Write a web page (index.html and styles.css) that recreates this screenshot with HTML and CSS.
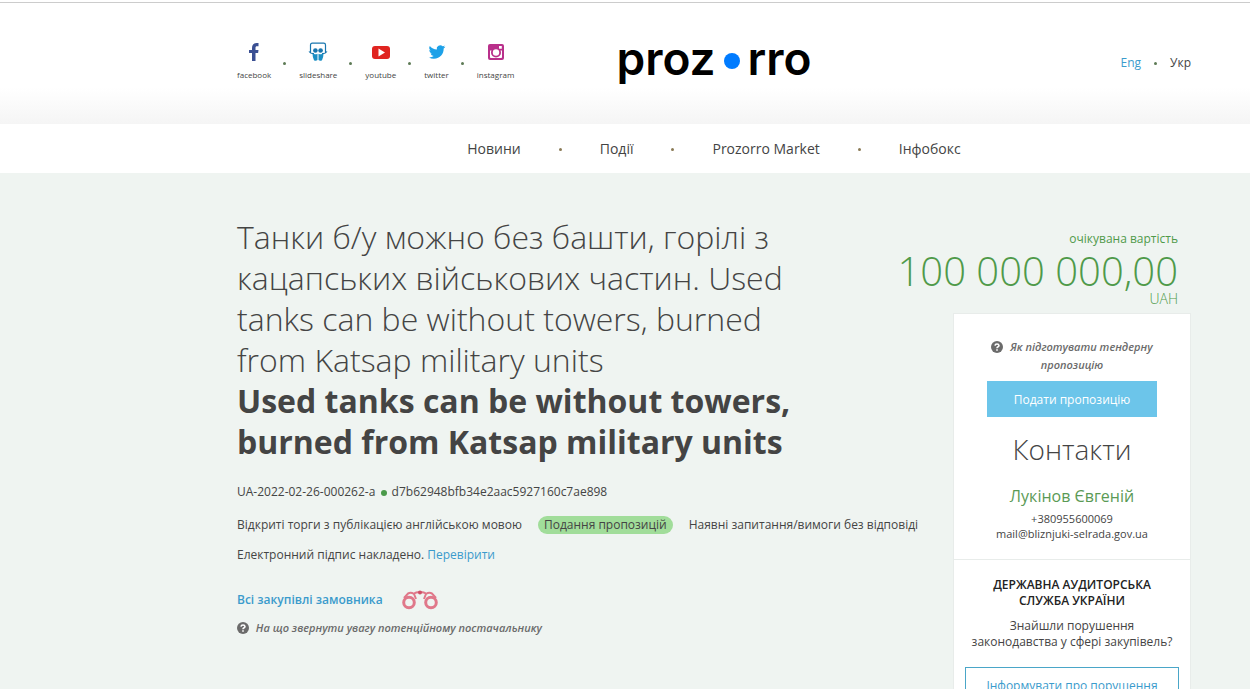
FILE: index.html
```
<!DOCTYPE html>
<html lang="uk">
<head>
    <meta charset="UTF-8">
    <meta name="viewport" content="width=device-width, initial-scale=1.0">
    <title>Prozorro</title>
    <link rel="stylesheet" href="styles.css">
</head>
<body>
    <header class="header">
        <ul class="social">
            <li>
                <a href="#">
                    <svg width="20" height="20" viewBox="0 0 20 20"><path fill="#3b5093" d="M8 19v-8H5V8h3V6c0-3.200 1.800-5 4.600-5H14.500v3.200H13c-1.200 0-1.500.6-1.500 1.600V8h3l-.4 3h-2.600v8z"/></svg>
                    facebook
                </a>
            </li>
            <li>
                <a href="#">
                    <svg width="20" height="20" viewBox="0 0 20 20"><path fill="none" stroke="#1876ae" stroke-width="1.200" d="M2.500 10.500V3q0-1.800 1.800-1.800h11.400q1.800 0 1.800 1.800v7.500M1 9.500q2 2.500 5 2M19 9.500q-2 2.500-5 2"/><circle cx="7.400" cy="8.500" r="2.300" fill="#1876ae"/><circle cx="12.600" cy="8.500" r="2.300" fill="#1876ae"/><path fill="#1c8fc4" d="M4.500 11.500q2.500 1.500 5 .2V18q-1.500 1.500-3.500.3Q4.500 15 4.500 11.500zM15.500 11.500q-2.500 1.500-5 .2V18q1.500 1.500 3.500.3 1.500-3.300 1.500-6.800z"/></svg>
                    slideshare
                </a>
            </li>
            <li>
                <a href="#">
                    <svg width="20" height="20" viewBox="0 0 20 20"><rect x="1" y="4" width="18" height="13" rx="3" fill="#e02420"/><path fill="#fff" d="M7.500 6.500v8l6.500-4z"/></svg>
                    youtube
                </a>
            </li>
            <li>
                <a href="#">
                    <svg width="20" height="20" viewBox="0 0 24 24"><path fill="#1da1e8" d="M22 5.800a8 8 0 0 1-2.400.6 4 4 0 0 0 1.800-2.200 8 8 0 0 1-2.600 1A4.100 4.100 0 0 0 11.800 9 11.600 11.600 0 0 1 3.400 4.700a4.100 4.100 0 0 0 1.300 5.500 4 4 0 0 1-1.900-.5 4.100 4.100 0 0 0 3.300 4 4 4 0 0 1-1.900.1 4.100 4.100 0 0 0 3.800 2.900A8.200 8.200 0 0 1 2 18.400a11.600 11.600 0 0 0 6.300 1.800c7.500 0 12-6.400 11.700-12.300A8 8 0 0 0 22 5.800z"/></svg>
                    twitter
                </a>
            </li>
            <li>
                <a href="#">
                    <svg width="20" height="20" viewBox="0 0 20 20"><rect x="2" y="2" width="16" height="16" rx="2" fill="#b9308b"/><path fill="#fff" d="M4 8.500h12v6.700q0 .8-.8.800H4.800q-.8 0-.8-.8zM13 4h2.800v2.800H13z"/><circle cx="10" cy="10.500" r="5" fill="#b9308b"/><circle cx="10" cy="10.500" r="3.200" fill="#fff"/></svg>
                    instagram
                </a>
            </li>
        </ul>
        <a class="logo" href="#"><span>proz</span><i class="logo-dot"></i><span>rro</span></a>
        <div class="lang">
            <a class="link" href="#">Eng</a>
            <a href="#">Укр</a>
        </div>
    </header>

    <nav class="menu">
        <a href="#">Новини</a>
        <a href="#">Події</a>
        <a href="#">Prozorro Market</a>
        <a href="#">Інфобокс</a>
    </nav>

    <main class="tender">
        <section class="info">
            <h1>Танки б/у можно без башти, горілі з кацапських військових частин. Used tanks can be without towers, burned from Katsap military units <b>Used tanks can be without towers, burned from Katsap military units</b></h1>
            <p class="tender-id">UA-2022-02-26-000262-a <i></i> d7b62948bfb34e2aac5927160c7ae898</p>
            <p class="status">
                <span>Відкриті торги з публікацією англійською мовою</span>
                <span class="badge">Подання пропозицій</span>
                <span>Наявні запитання/вимоги без відповіді</span>
            </p>
            <p>Електронний підпис накладено. <a class="link" href="#">Перевірити</a></p>
            <div class="customer">
                <a class="link" href="#">Всі закупівлі замовника</a>
                <svg width="38" height="20" viewBox="0 0 38 20"><g fill="none" stroke="#e0788a"><circle cx="8" cy="12.500" r="5.300" stroke-width="3"/><circle cx="30" cy="12.500" r="5.300" stroke-width="3"/><path stroke-width="2" d="M3 8l4-4.500q3-1.500 6 .5l2 5M35 8l-4-4.500q-3-1.500-6 .5l-2 5M12 4q3-2 7-2t7 2"/></g><circle cx="19" cy="2.500" r="2" fill="#cf4f66"/></svg>
            </div>
            <a class="hint" href="#">
                <svg width="12" height="12" viewBox="0 0 12 12"><circle cx="6" cy="6" r="6" fill="#6b6b6b"/><path fill="none" stroke="#fff" stroke-width="1.600" d="M4 4.700Q4.200 3 6 3t2 1.500Q8 5.400 6.800 5.900 6 6.300 6 7.300M6 8.300v1.500"/></svg>
                На що звернути увагу потенційному постачальнику
            </a>
        </section>

        <aside class="side">
            <div class="price">
                <span class="price-label">очікувана вартість</span>
                <span class="price-sum">100 000 000,00</span>
                <span class="price-currency">UAH</span>
            </div>
            <div class="card">
                <div class="card-block">
                    <a class="hint" href="#">
                        <svg width="12" height="12" viewBox="0 0 12 12"><circle cx="6" cy="6" r="6" fill="#6b6b6b"/><path fill="none" stroke="#fff" stroke-width="1.600" d="M4 4.700Q4.200 3 6 3t2 1.500Q8 5.400 6.800 5.900 6 6.300 6 7.300M6 8.300v1.500"/></svg>
                        Як підготувати тендерну пропозицію
                    </a>
                    <button class="btn" type="button">Подати пропозицію</button>
                    <h2>Контакти</h2>
                    <p class="contact-name">Лукінов Євгеній</p>
                    <p class="contact">+380955600069<br>mail@bliznjuki-selrada.gov.ua</p>
                </div>
                <div class="card-block audit">
                    <h3>ДЕРЖАВНА АУДИТОРСЬКА СЛУЖБА УКРАЇНИ</h3>
                    <p>Знайшли порушення законодавства у сфері закупівель?</p>
                    <button class="btn btn-outline" type="button">Інформувати про порушення</button>
                </div>
            </div>
        </aside>
    </main>
</body>
</html>
```
FILE: styles.css
```
* {
    box-sizing: border-box;
}
html {
    background-color: #eff4f1;
}
body {
    margin: 0;
    font-family: "Open Sans", sans-serif;
    font-size: 12px;
    line-height: 18px;
    color: #444;
}
a {
    color: inherit;
    text-decoration: none;
}
h1, h2, h3, p, ul {
    margin: 0;
    padding: 0;
}
.link {
    color: #3b9bcc;
}

/* header */
.header {
    display: grid;
    grid-template-columns: 1fr auto 1fr;
    align-items: center;
    height: 124px;
    padding: 0 59px 0 237px;
    border-top: 2px solid #fff;
    box-shadow: inset 0 1px 0 #ccc;
    background: linear-gradient(#fff 70%, #f5f5f5);
}
.social {
    display: flex;
    padding-bottom: 4px;
    list-style: none;
    font-size: 8px;
    line-height: 10px;
}
.social li {
    display: flex;
    align-items: center;
}
.social a {
    display: flex;
    flex-direction: column;
    align-items: center;
    gap: 8px;
}
.social li + li::before,
.lang a + a::before,
.menu a + a::before {
    content: "";
    width: 3px;
    height: 3px;
    border-radius: 50%;
    background-color: #5d7a55;
}
.social li + li::before {
    margin: 4px 13px 0 12px;
}
.logo {
    display: flex;
    align-items: center;
    gap: 8px;
    padding-bottom: 10px;
    font-family: Inter, sans-serif;
    font-size: 46px;
    font-weight: 600;
    line-height: 56px;
    color: #000;
}
.logo-dot {
    width: 16px;
    height: 16px;
    margin-top: 6px;
    border-radius: 50%;
    background-color: #007bff;
}
.lang {
    display: flex;
    justify-content: flex-end;
}
.lang a {
    display: flex;
    align-items: center;
}
.lang a + a::before {
    margin: 0 13px;
}

/* main menu */
.menu {
    display: flex;
    justify-content: center;
    padding: 16px 59px 15px 237px;
    background-color: #fff;
    font-size: 14px;
}
.menu a {
    display: flex;
    align-items: center;
}
.menu a + a::before {
    margin: 0 38px;
    background-color: #8a7a55;
}

/* tender */
.tender {
    display: flex;
    justify-content: space-between;
    padding: 43px 59px 0 237px;
}
.info {
    white-space: nowrap;
}
.info h1 {
    max-width: 570px;
    margin-bottom: 21px;
    font-size: 32px;
    font-weight: 300;
    line-height: 41px;
    white-space: normal;
}
.info h1 b {
    display: block;
    font-weight: 700;
}
.info p {
    margin-bottom: 12px;
}
.info .tender-id {
    margin-bottom: 15px;
}
.tender-id i {
    display: inline-block;
    width: 6px;
    height: 6px;
    margin: 0 2px;
    border-radius: 50%;
    background-color: #4a9a4a;
}
.status {
    display: flex;
    gap: 16px;
}
.badge {
    padding: 0 6px;
    border-radius: 9px;
    background-color: #a1dd9a;
}
.customer {
    display: flex;
    align-items: center;
    gap: 18px;
    margin: 26px 0 9px;
    font-weight: 600;
}
.hint {
    font-size: 11px;
    font-style: italic;
    font-weight: 600;
    color: #6b6b6b;
}
.hint svg {
    margin-right: 4px;
    vertical-align: -2px;
}

/* right column */
.side {
    display: flex;
    flex-direction: column;
    width: 238px;
    padding-top: 14px;
}
.price {
    display: flex;
    flex-direction: column;
    align-items: flex-end;
    align-self: flex-end;
    padding-right: 13px;
    margin-bottom: 9px;
    color: #4f9a4a;
    white-space: nowrap;
}
.price-sum {
    font-size: 40px;
    font-weight: 300;
    line-height: 46px;
}
.price-currency {
    font-size: 14px;
    font-weight: 300;
    line-height: 10px;
}
.card {
    border: 1px solid #e8ecea;
    background-color: #fff;
    text-align: center;
}
.card-block {
    padding: 24px 33px 18px;
}
.btn {
    display: block;
    width: 100%;
    height: 36px;
    margin-top: 7px;
    padding: 0;
    border: 0;
    background-color: #6cc5ea;
    color: #fff;
    font-family: inherit;
    font-size: 12px;
    cursor: pointer;
}
.card h2 {
    margin: 14px 0 19px;
    font-size: 28px;
    font-weight: 300;
    line-height: 36px;
}
.contact-name {
    margin-bottom: 5px;
    font-size: 16px;
    line-height: 20px;
    color: #5a9a55;
}
.contact {
    font-size: 11px;
    line-height: 15px;
    white-space: nowrap;
}
.audit {
    padding: 17px 11px;
    border-top: 1px solid #e8ecea;
}
.audit h3 {
    padding: 0 20px;
    margin-bottom: 9px;
    font-size: 12px;
    font-weight: 600;
    line-height: 16px;
    color: #222;
}
.audit p {
    padding: 0 3px;
    line-height: 16px;
}
.btn-outline {
    margin-top: 17px;
    border: 1px solid #4aa6c8;
    background-color: #fff;
    color: #3b9bcc;
}
```
